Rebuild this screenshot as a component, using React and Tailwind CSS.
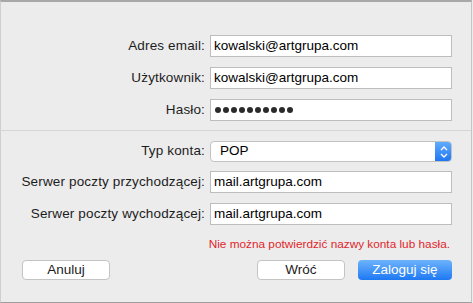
import React from "react";

const Field = ({ value, dots }) => (
  <div className="ml-[5px] w-[242px] h-[22px] bg-white border border-[#bdbdbd] flex items-center pl-[3px] text-[13.5px] text-black">
    {dots ? (
      <div className="flex gap-[2px] pl-[1px]">
        {Array.from({ length: 10 }).map((_, i) => (
          <span key={i} className="w-[6px] h-[6px] rounded-full bg-[#2b2b2b]" />
        ))}
      </div>
    ) : (
      value
    )}
  </div>
);

const Row = ({ label, children, className = "" }) => (
  <div className={`flex items-center ${className}`}>
    <div className="w-[205px] text-right text-[13.5px] tracking-[0.15px] text-[#1c1c1c] whitespace-nowrap">{label}</div>
    {children}
  </div>
);

export default function App() {
  return (
    <div
      className="w-[473px] h-[303px] bg-[#ececec] overflow-hidden"
      style={{ fontFamily: '"Liberation Sans", Arial, sans-serif' }}
    >
      <div className="w-[472px] h-[303px] border-t-2 border-t-[#a8a8a8] border-l border-l-[#cfcfcf] border-r border-r-[#c4c4c4] border-b border-b-[#9e9e9e] flex flex-col">
        {/* account fields */}
        <div className="flex flex-col gap-[10px] pt-[33px] -ml-px">
          <Row label="Adres email:">
            <Field value="kowalski@artgrupa.com" />
          </Row>
          <Row label="Użytkownik:">
            <Field value="kowalski@artgrupa.com" />
          </Row>
          <Row label="Hasło:">
            <Field dots />
          </Row>
        </div>

        <div className="mt-[9px] h-px bg-[#d6d6d6] -ml-px" />

        {/* server fields */}
        <div className="flex flex-col gap-[10px] pt-[10px] -ml-px">
          <Row label="Typ konta:" className="-mb-[1px]">
            <div className="ml-[5px] w-[242px] h-[21px] bg-white border border-[#c2c2c2] rounded-[4px] flex items-center overflow-hidden">
              <span className="flex-1 pl-[9px] text-[13.5px] text-black">POP</span>
              <div className="w-[17px] h-[21px] -mr-px bg-gradient-to-b from-[#63aefc] to-[#1a73f2] flex flex-col items-center justify-center gap-[2px]">
                <svg width="8" height="5" viewBox="0 0 8 5">
                  <path d="M1 4 L4 1 L7 4" stroke="white" strokeWidth="1.4" fill="none" />
                </svg>
                <svg width="8" height="5" viewBox="0 0 8 5">
                  <path d="M1 1 L4 4 L7 1" stroke="white" strokeWidth="1.4" fill="none" />
                </svg>
              </div>
            </div>
          </Row>
          <Row label="Serwer poczty przychodzącej:">
            <Field value="mail.artgrupa.com" />
          </Row>
          <Row label="Serwer poczty wychodzącej:">
            <Field value="mail.artgrupa.com" />
          </Row>
        </div>

        <div className="mt-[12px] pr-[21px] text-right text-[11.8px] leading-[14px] text-[#e0272d]">
          Nie można potwierdzić nazwy konta lub hasła.
        </div>

        {/* buttons */}
        <div className="mt-[9px] flex items-center pl-[21px] pr-[19px]">
          <button className="w-[88px] h-[20px] bg-white border border-[#c4c4c4] rounded-[4px] text-[13.5px] text-[#1c1c1c] leading-none">
            Anuluj
          </button>
          <div className="flex-1" />
          <button className="w-[88px] h-[20px] bg-white border border-[#c4c4c4] rounded-[4px] text-[13.5px] text-[#1c1c1c] leading-none">
            Wróć
          </button>
          <button className="ml-[13px] w-[94px] h-[20px] bg-gradient-to-b from-[#6cb3fb] to-[#1b78f3] rounded-[4px] text-[13.5px] text-white leading-none">
            Zaloguj się
          </button>
        </div>
      </div>
    </div>
  );
}
